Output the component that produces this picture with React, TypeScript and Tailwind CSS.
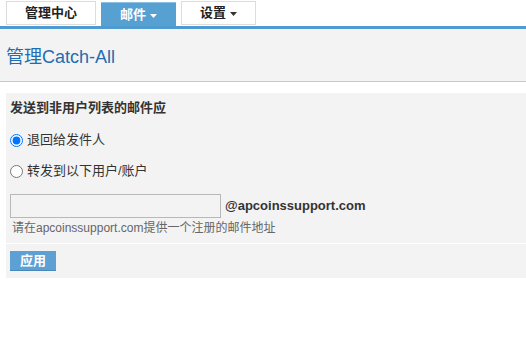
import { useState } from "react";

const font = "font-['Liberation_Sans','Noto_Sans_CJK_SC',sans-serif]";

function Caret({ color }: { color: string }) {
  return (
    <svg width="7" height="4" viewBox="0 0 7 4" className="ml-1 mt-[2px]">
      <path d="M0 0 L7 0 L3.5 4 Z" fill={color} />
    </svg>
  );
}

export default function App() {
  const [mode, setMode] = useState("bounce");

  return (
    <div className={`${font} w-[526px] h-[351px] bg-white text-[#333]`}>
      {/* tabs */}
      <div className="flex items-end h-[26px] pl-[6px] gap-[5px]">
        <div className="flex items-center justify-center w-[90px] h-[24px] mb-[1px] bg-white border border-[#dcdcdc] text-[13px] font-bold text-[#222]">
          管理中心
        </div>
        <div className="flex items-center justify-center w-[75px] h-[24px] bg-[#57a0d2] border-t border-[#8cc0e4] text-[13px] font-bold text-white">
          邮件
          <Caret color="#ffffff" />
        </div>
        <div className="flex items-center justify-center w-[75px] h-[24px] mb-[1px] bg-white border border-[#dcdcdc] text-[13px] font-bold text-[#222]">
          设置
          <Caret color="#333333" />
        </div>
      </div>
      <div className="h-[3px] bg-[#4f9bd0]" />

      {/* page title */}
      <div className="h-[53px] bg-[#f3f3f3] border-b border-[#c8c8c8] flex items-center pl-[6px] pt-[4px]">
        <h1 className="text-[18px] text-[#1f6db0]">管理Catch-All</h1>
      </div>

      {/* form panel */}
      <div className="mt-[11px] ml-[6px] bg-[#f3f3f3]">
        <div className="px-[4px] pt-[6px] pb-[7px]">
          <div className="text-[13px] font-bold text-[#333] leading-[16px] mt-[1px]">
            发送到非用户列表的邮件应
          </div>
          <label className="flex items-center mt-[16px] text-[13px] leading-[16px]">
            <input
              type="radio"
              name="mode"
              checked={mode === "bounce"}
              onChange={() => setMode("bounce")}
              className="w-[13px] h-[13px] m-0 mr-[4px]"
            />
            退回给发件人
          </label>
          <label className="flex items-center mt-[15px] text-[13px] leading-[16px]">
            <input
              type="radio"
              name="mode"
              checked={mode === "forward"}
              onChange={() => setMode("forward")}
              className="w-[13px] h-[13px] m-0 mr-[4px]"
            />
            转发到以下用户/账户
          </label>
          <div className="flex items-center mt-[15px]">
            <input
              type="text"
              className="w-[211px] h-[24px] bg-[#f3f3f3] border border-[#b8b8b8] outline-none px-1 text-[13px]"
            />
            <span className="ml-[4px] text-[13px] font-bold text-[#333]">@apcoinssupport.com</span>
          </div>
          <div className="mt-[2px] ml-[2px] text-[12px] leading-[16px] text-[#666]">
            请在apcoinssupport.com提供一个注册的邮件地址
          </div>
        </div>
        <div className="border-t border-white px-[4px] pt-[7px] pb-[7px]">
          <button className="flex items-center justify-center w-[46px] h-[20px] bg-[#5da0d3] border-b border-[#4a88b8] text-white text-[13px] font-bold">
            应用
          </button>
        </div>
      </div>
    </div>
  );
}
